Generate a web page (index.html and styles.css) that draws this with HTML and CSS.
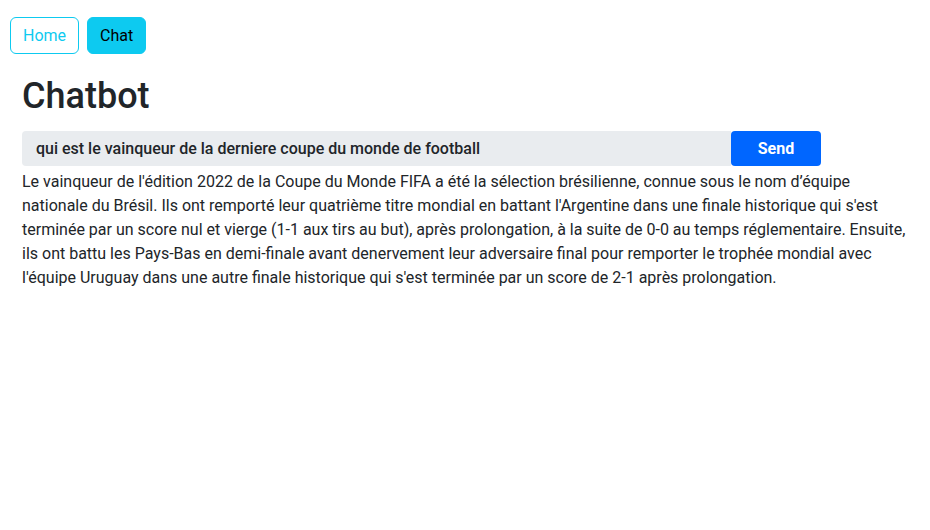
FILE: index.html
```html
<!DOCTYPE html>
<html lang="fr">
<head>
<meta charset="utf-8">
<title>Chatbot</title>
<link rel="stylesheet" href="styles.css">
</head>
<body>
<nav class="nav">
  <a class="btn btn-outline">Home</a>
  <a class="btn btn-fill">Chat</a>
</nav>
<main class="main">
  <h1 class="title">Chatbot</h1>
  <form class="ask">
    <input class="ask-input" type="text" value="qui est le vainqueur de la derniere coupe du monde de football">
    <button class="ask-send" type="button">Send</button>
  </form>
  <p class="answer">Le vainqueur de l'édition 2022 de la Coupe du Monde FIFA a été la sélection brésilienne, connue sous le nom d’équipe nationale du Brésil. Ils ont remporté leur quatrième titre mondial en battant l'Argentine dans une finale historique qui s'est terminée par un score nul et vierge (1-1 aux tirs au but), après prolongation, à la suite de 0-0 au temps réglementaire. Ensuite, ils ont battu les Pays-Bas en demi-finale avant denervement leur adversaire final pour remporter le trophée mondial avec l'équipe Uruguay dans une autre finale historique qui s'est terminée par un score de 2-1 après prolongation.</p>
</main>
</body>
</html>
```

FILE: styles.css
```css
* { box-sizing: border-box; }
html, body { margin: 0; padding: 0; background: #fff; }
body {
  font-family: Roboto, "Liberation Sans", sans-serif;
  font-size: 16px;
  line-height: 24px;
  color: #212529;
}
.nav {
  display: flex;
  gap: 8px;
  padding: 17px 10px 0;
}
.btn {
  display: inline-block;
  height: 37px;
  padding: 0 12px;
  line-height: 35px;
  font-size: 16px;
  border: 1px solid #0dcaf0;
  border-radius: 6px;
  text-decoration: none;
  cursor: pointer;
}
.btn-outline { color: #0dcaf0; background: #fff; }
.btn-fill { color: #000; background: #0dcaf0; }
.main { padding: 21px 22px 0; }
.title {
  margin: 0 0 13px;
  font-size: 36px;
  line-height: 43px;
  font-weight: 500;
  color: #212529;
}
.ask {
  display: flex;
  margin: 0 0 4px;
}
.ask-input {
  width: 709px;
  height: 35px;
  border: 0;
  border-radius: 4px 0 0 4px;
  background: #e9ecef;
  padding: 0 14px;
  font-family: inherit;
  font-size: 16px;
  font-weight: 500;
  color: #212529;
  outline: none;
}
.ask-send {
  width: 90px;
  height: 35px;
  border: 0;
  border-radius: 4px;
  background: #0066ff;
  color: #fff;
  font-family: inherit;
  font-size: 16px;
  font-weight: 700;
}
.answer {
  margin: 0;
  max-width: 888px;
}
```
